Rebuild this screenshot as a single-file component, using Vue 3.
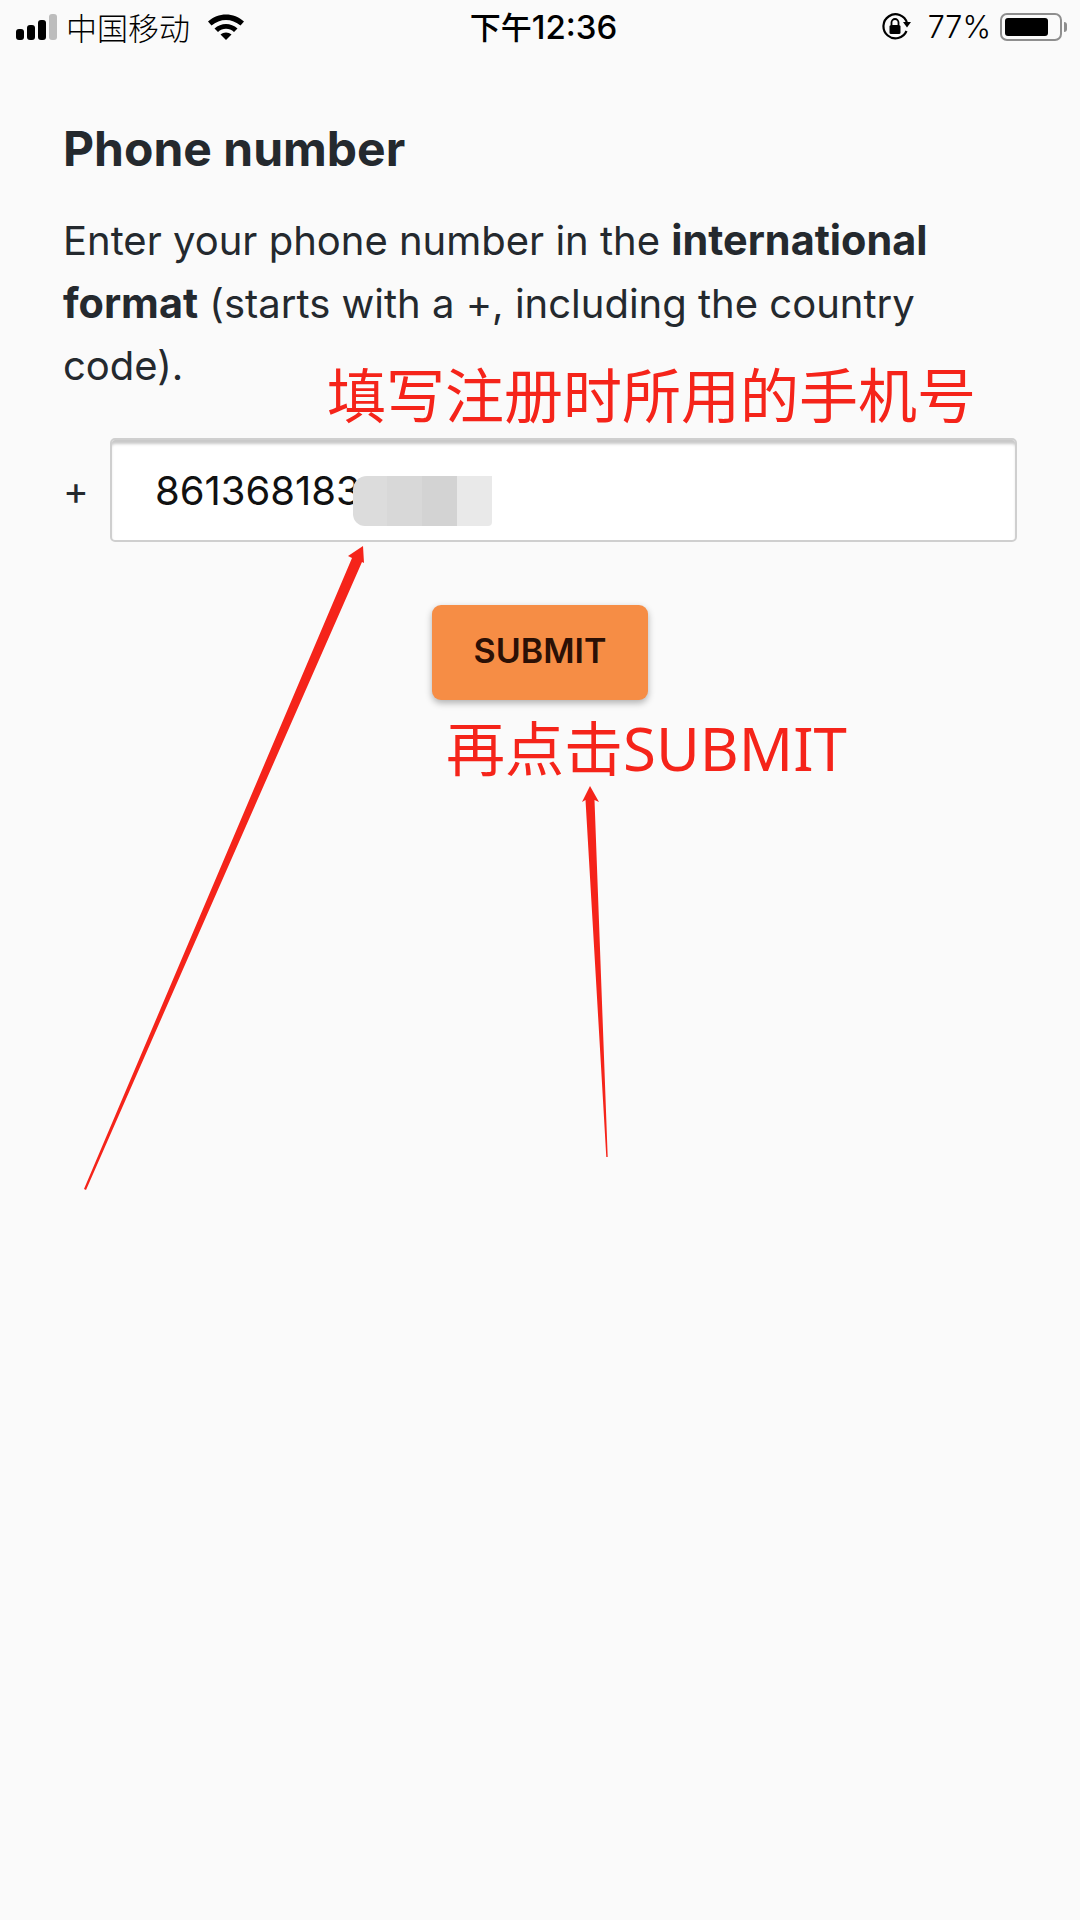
<script setup>
const phone = '861368183'
</script>

<template>
    <div class="screen">
        <header class="status-bar">
            <div class="status-left">
                <div class="signal">
                    <i class="bar bar-1"></i>
                    <i class="bar bar-2"></i>
                    <i class="bar bar-3"></i>
                    <i class="bar bar-4"></i>
                </div>
                <span class="carrier">中国移动</span>
                <svg class="wifi" viewBox="0 0 36 26" width="36" height="26">
                    <path d="M0 7.5 C10 -2 26 -2 36 7.5 L32.5 11.5 C24 4 12 4 3.5 11.5 Z" fill="#000" />
                    <path d="M6.5 14.5 C13 8.5 23 8.5 29.500 14.500 L26 18 C21.500 13.800 14.500 13.800 10 18 Z" fill="#000" />
                    <path d="M12.500 20.500 C15.500 17.800 20.500 17.800 23.500 20.500 L18 26 Z" fill="#000" />
                </svg>
            </div>
            <div class="time">下午<span class="time-digits">12:36</span></div>
            <div class="status-right">
                <svg class="lock" viewBox="0 0 30 28" width="30" height="28">
                    <path d="M25.500 18 A12 12 0 1 1 26 10" fill="none" stroke="#000" stroke-width="2.200" />
                    <path d="M22 9 L30 9 L26 14.500 Z" fill="#000" />
                    <rect x="8.500" y="12" width="11" height="9" rx="1.500" fill="#000" />
                    <path d="M10.500 12 V9.500 A3.500 3.500 0 0 1 17.500 9.500 V12" fill="none" stroke="#000" stroke-width="1.800" />
                </svg>
                <span class="battery-text">77%</span>
                <div class="battery">
                    <div class="battery-body"><div class="battery-level"></div></div>
                    <div class="battery-nub"></div>
                </div>
            </div>
        </header>

        <main class="content">
            <h1 class="title">Phone number</h1>
            <p class="intro">
                Enter your phone number in the <b>international format</b> (starts with a +, including the country code).
            </p>
            <div class="phone-row">
                <span class="plus">+</span>
                <div class="phone-input">
                    <span class="phone-value">{{ phone }}</span>
                    <div class="mosaic">
                        <i class="tile tile-1"></i>
                        <i class="tile tile-2"></i>
                        <i class="tile tile-3"></i>
                        <i class="tile tile-4"></i>
                    </div>
                </div>
            </div>
            <button class="submit" type="button">SUBMIT</button>
        </main>

        <div class="note note-phone">填写注册时所用的手机号</div>
        <div class="note note-submit">再点击<span class="note-latin">SUBMIT</span></div>

        <svg class="arrows" viewBox="0 0 1080 1920" width="1080" height="1920">
            <path d="M363 546 L364 563 L362 562 L86 1190 L84 1189 L352 558 L348 556 Z" fill="#f5241a" />
            <path d="M590 786 L599 802 L594.500 800 L607.700 1157 L606.300 1157 L585.500 800 L582 802 Z" fill="#f5241a" />
        </svg>
    </div>
</template>

<style scoped>
.screen {
    position: relative;
    width: 1080px;
    height: 1920px;
    overflow: hidden;
    background: #fafafa;
    color: #24292e;
    font-family: Inter, "Noto Sans CJK SC", sans-serif;
}

.status-bar {
    display: grid;
    grid-template-columns: 1fr auto 1fr;
    align-items: center;
    height: 54px;
    padding: 0 13px 0 16px;
    color: #000;
}

.status-left {
    display: flex;
    align-items: center;
}

.signal {
    display: flex;
    align-items: flex-end;
    gap: 3px;
    height: 26px;
}

.bar {
    display: block;
    width: 8px;
    border-radius: 3px;
    background: #000;
}

.bar-1 {
    height: 11px;
}

.bar-2 {
    height: 15px;
}

.bar-3 {
    height: 20px;
}

.bar-4 {
    height: 26px;
    background: #bdbdbd;
}

.carrier {
    margin-left: 9px;
    font-size: 31px;
    font-family: "Noto Sans CJK SC", sans-serif;
    font-weight: 300;
    line-height: 40px;
}

.wifi {
    margin-left: 18px;
}

.time {
    margin-left: 4px;
    font-size: 31px;
    font-weight: 500;
    line-height: 40px;
}

.time-digits {
    font-size: 33px;
}

.status-right {
    display: flex;
    align-items: center;
    justify-content: flex-end;
}

.lock {
    margin-right: 17px;
}

.battery-text {
    font-size: 30.500px;
    font-weight: 300;
    line-height: 40px;
}

.battery {
    display: flex;
    align-items: center;
    margin-left: 9px;
}

.battery-body {
    width: 62px;
    height: 28px;
    box-sizing: border-box;
    padding: 3px;
    border: 2px solid #8e8e8e;
    border-radius: 7px;
}

.battery-level {
    width: 43px;
    height: 100%;
    border-radius: 3px;
    background: #000;
}

.battery-nub {
    width: 3px;
    height: 10px;
    margin-left: 2px;
    border-radius: 0 3px 3px 0;
    background: #8e8e8e;
}

.content {
    display: flex;
    flex-direction: column;
    padding: 65px 63px 0;
}

.title {
    margin: 0;
    font-size: 48px;
    font-weight: 700;
    line-height: 60px;
}

.intro {
    margin: 30px 0 0;
    font-size: 40px;
    font-weight: 400;
    line-height: 62px;
}

.intro b {
    font-size: 41.400px;
    font-weight: 700;
}

.phone-row {
    display: flex;
    align-items: center;
    margin-top: 41px;
}

.plus {
    width: 47px;
    font-size: 39px;
}

.phone-input {
    position: relative;
    flex: 1;
    height: 104px;
    box-sizing: border-box;
    display: flex;
    align-items: center;
    padding-left: 43px;
    border: 2px solid #cfcfcf;
    border-radius: 5px;
    background: #fff;
    box-shadow: inset 0 5px 3px -1px #c9c9c9;
}

.phone-value {
    font-size: 40px;
    color: #111;
}

.mosaic {
    position: absolute;
    left: 241px;
    top: 36px;
    display: flex;
    height: 50px;
    border-radius: 14px 0 4px 12px;
    overflow: hidden;
}

.tile {
    display: block;
    height: 100%;
}

.tile-1 {
    width: 34px;
    background: #dcdcdc;
}

.tile-2 {
    width: 35px;
    background: #d8d8d8;
}

.tile-3 {
    width: 35px;
    background: #d3d3d3;
}

.tile-4 {
    width: 35px;
    background: #e9e9e9;
}

.submit {
    align-self: center;
    width: 216px;
    height: 95px;
    margin-top: 63px;
    padding: 0 0 4px;
    border: 0;
    border-radius: 9px;
    background: #f68d45;
    color: #2b1005;
    font-family: Inter, sans-serif;
    font-size: 34px;
    font-weight: 600;
    box-shadow: 0 3px 7px rgba(0, 0, 0, 0.3);
}

.note {
    position: absolute;
    color: #f5241a;
    font-family: "Noto Sans CJK SC", sans-serif;
    font-size: 59px;
    line-height: 72px;
    white-space: nowrap;
}

.note-phone {
    left: 327px;
    top: 357px;
}

.note-submit {
    left: 446px;
    top: 710px;
}

.note-latin {
    font-family: "Noto Sans", sans-serif;
    font-size: 60px;
}

.arrows {
    position: absolute;
    left: 0;
    top: 0;
    pointer-events: none;
}
</style>
